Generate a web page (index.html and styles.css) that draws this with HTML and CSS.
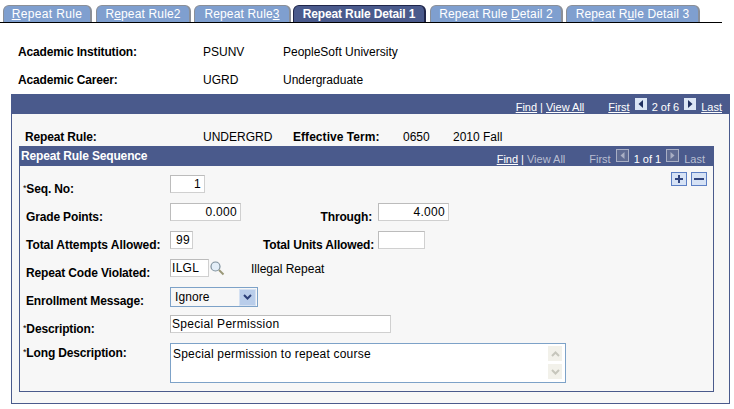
FILE: index.html
```html
<!DOCTYPE html>
<html lang="en">
<head>
<meta charset="utf-8">
<title>Repeat Rule Detail 1</title>
<link rel="stylesheet" href="styles.css">
</head>
<body>
<nav class="tabs">
  <a class="tab t1"><u>R</u>epeat Rule</a>
  <a class="tab t2">R<u>e</u>peat Rule2</a>
  <a class="tab t3">Repeat Rule<u>3</u></a>
  <a class="tab t4 active">Repeat Rule Detail 1</a>
  <a class="tab t5">Repeat Rule <u>D</u>etail 2</a>
  <a class="tab t6">Repeat R<u>u</u>le Detail 3</a>
</nav>
<section class="head">
  <div class="head-row"><b class="head-label">Academic Institution:</b><span class="head-code">PSUNV</span><span>PeopleSoft University</span></div>
  <div class="head-row"><b class="head-label">Academic Career:</b><span class="head-code">UGRD</span><span>Undergraduate</span></div>
</section>
<section class="outer">
  <header class="outer-bar">
    <a class="lnk">Find</a><span class="sep">|</span><a class="lnk">View All</a>
    <a class="lnk first">First</a>
    <svg class="nav" viewBox="0 0 12 12"><rect width="12" height="12" fill="#dce6f5"/><path d="M8 2v8L3.500 6z" fill="#1f2f5f"/></svg>
    <span>2 of 6</span>
    <svg class="nav" viewBox="0 0 12 12"><rect width="12" height="12" fill="#dce6f5"/><path d="M4 2v8l4.500-4z" fill="#1f2f5f"/></svg>
    <a class="lnk">Last</a>
  </header>
  <div class="rule-row">
    <b class="rr-label">Repeat Rule:</b><span class="rr-code">UNDERGRD</span>
    <b class="rr-term">Effective Term:</b><span class="rr-num">0650</span><span>2010 Fall</span>
  </div>
  <section class="inner">
    <header class="inner-bar">
      <b class="inner-title">Repeat Rule Sequence</b>
      <a class="lnk">Find</a><span class="sep">|</span><span class="dim">View All</span>
      <span class="dim first">First</span>
      <svg class="nav off" viewBox="0 0 13 13"><rect x=".5" y=".5" width="12" height="12" fill="#5f6b92" stroke="#a9afc4"/><path d="M8.500 3v7L4.500 6.500z" fill="#a9afc4"/></svg>
      <span>1 of 1</span>
      <svg class="nav off" viewBox="0 0 13 13"><rect x=".5" y=".5" width="12" height="12" fill="#5f6b92" stroke="#a9afc4"/><path d="M4.500 3v7l4-3.500z" fill="#a9afc4"/></svg>
      <span class="dim">Last</span>
    </header>
    <div class="actions">
      <svg class="act" viewBox="0 0 16 14"><rect x=".5" y=".5" width="15" height="13" fill="#d6e2f5" stroke="#5c7fc4"/><path d="M7 3h2v3h3v2H9v3H7V8H4V6h3z" fill="#31457f"/></svg>
      <svg class="act" viewBox="0 0 16 14"><rect x=".5" y=".5" width="15" height="13" fill="#d6e2f5" stroke="#5c7fc4"/><path d="M3 6h10v2H3z" fill="#31457f"/></svg>
    </div>
    <div class="form">
      <div class="row r-seq"><b class="lab req"><sup>*</sup>Seq. No:</b><span class="field w35 num">1</span></div>
      <div class="row"><b class="lab">Grade Points:</b><span class="field w71 num">0.000</span><b class="lab2">Through:</b><span class="field w71 num">4.000</span></div>
      <div class="row"><b class="lab wider">Total Attempts Allowed:</b><span class="field w23 num tight">99</span><b class="lab2 wide">Total Units Allowed:</b><span class="field w47"></span></div>
      <div class="row"><b class="lab">Repeat Code Violated:</b><span class="field w39 code">ILGL</span>
        <svg class="glass" viewBox="0 0 16 16"><circle cx="6.500" cy="6.500" r="4.500" fill="#e3eef8" stroke="#7d8f9c" stroke-width="1.200"/><path d="M10 10l4.500 4.500" stroke="#9a9878" stroke-width="2"/></svg>
        <span class="after">Illegal Repeat</span></div>
      <div class="row r-sel"><b class="lab">Enrollment Message:</b>
        <span class="select"><span class="sel-text">Ignore</span><span class="sel-btn"><svg viewBox="0 0 9 6" width="9" height="6"><path d="M1 1l3.500 3.500L8 1" fill="none" stroke="#2c3f78" stroke-width="2"/></svg></span></span></div>
      <div class="row"><b class="lab req"><sup>*</sup>Description:</b><span class="field w221 code">Special Permission</span></div>
      <div class="row r-long"><b class="lab req"><sup>*</sup>Long Description:</b>
        <div class="area"><span class="area-text">Special permission to repeat course</span>
          <span class="scroll">
            <span class="sb"><svg viewBox="0 0 9 6" width="9" height="6"><path d="M1 5l3.500-3.500L8 5" fill="none" stroke="#c6c6bc" stroke-width="2"/></svg></span>
            <span class="sb"><svg viewBox="0 0 9 6" width="9" height="6"><path d="M1 1l3.500 3.500L8 1" fill="none" stroke="#c6c6bc" stroke-width="2"/></svg></span>
          </span>
        </div></div>
    </div>
  </section>
</section>
</body>
</html>
```
FILE: styles.css
```css
* { box-sizing: border-box; }
html, body { margin: 0; padding: 0; }
body { width: 734px; height: 409px; overflow: hidden; background: #fff; color: #000; font: 12px/14px "Liberation Sans", Arial, sans-serif; }
u { text-decoration: underline; }
b { letter-spacing: -.15px; }
sup { font-size: 9px; line-height: 0; vertical-align: 2px; font-weight: normal; }

.tabs { display: flex; align-items: flex-end; height: 23px; width: 722px; padding: 5px 0 0 3px; border-bottom: 1px solid #000; }
.tab { height: 17px; margin-right: 3px; border: 1px solid #8a8f98; border-bottom: 0; border-right-width: 2px; border-radius: 6px 6px 0 0; background: #7f9fcf; color: #fff; text-align: center; line-height: 16px; letter-spacing: .15px; white-space: nowrap; }
.t1 { width: 89px; margin-right: 4px; letter-spacing: .35px; }
.t2 { width: 95px; }
.t3 { width: 97px; margin-right: 2px; }
.t4 { width: 133px; margin-right: 4px; }
.t5 { width: 133px; margin-right: 3px; }
.t6 { width: 134px; }
.active { background: #4a5a8c; border-color: #20264a; color: #fff; font-weight: bold; letter-spacing: -.15px; }

.head { padding: 22px 0 0 18px; height: 71px; }
.head-row { display: flex; height: 28px; }
.head-label { width: 185px; }
.head-code { width: 80px; }

.outer { margin-left: 11px; width: 719px; height: 310px; border: 1px solid #4a5a8c; border-top: 0; background: #f7f7f7; }
.outer-bar, .inner-bar { display: flex; align-items: center; justify-content: flex-end; height: 20px; background: #4a5a8c; color: #fff; white-space: nowrap; font-size: 11px; }
.outer-bar { padding: 5px 8px 0 0; margin: 0 -1px; }
.inner-bar { padding: 5px 9px 0 2px; margin: 0 -1px; }
.inner-title { margin-right: auto; margin-top: -6px; font-size: 12px; }
.lnk { color: #fff; text-decoration: underline; }
.sep { margin: 0 3px; }
.first { margin-left: 24px; }
.dim { color: #b9bfd2; }
.nav { width: 12px; height: 12px; margin: -6px 5px 0; }
.off { width: 13px; height: 13px; }

.rule-row { display: flex; height: 32px; padding: 16px 0 0 13px; }
.rr-label { width: 178px; }
.rr-code { width: 90px; }
.rr-term { width: 110px; letter-spacing: .05px; }
.rr-num { width: 50px; }

.inner { margin-left: 7px; width: 695px; height: 246px; border: 1px solid #4a5a8c; border-top: 0; }
.actions { display: flex; justify-content: flex-end; gap: 4px; height: 0; padding-right: 6px; padding-top: 6px; }
.act { width: 16px; height: 14px; flex: none; }
.form { padding-top: 3px; padding-left: 6px; }
.row { display: flex; align-items: flex-start; height: 28px; }
.lab { width: 144px; padding-top: 7px; white-space: nowrap; flex: none; }
.wider { letter-spacing: -.05px; }
.req { margin-left: -3px; width: 147px; }
.lab2 { width: 137px; padding-top: 7px; text-align: right; padding-right: 6px; white-space: nowrap; }
.wide { width: 185px; padding-right: 4px; }
.field { display: block; height: 18px; background: #fff; border: 1px solid #bcbcbc; border-bottom-color: #d0d0d0; border-right-color: #d0d0d0; line-height: 16px; padding: 0 3px; flex: none; letter-spacing: .3px; }
.num { text-align: right; }
.tight { padding: 0 2px; }
.code { padding: 0 1px; }
.w35 { width: 35px; }
.w71 { width: 71px; }
.w23 { width: 23px; }
.w47 { width: 47px; }
.w39 { width: 39px; }
.w221 { width: 221px; }
.glass { width: 16px; height: 16px; margin-top: 1px; flex: none; }
.after { margin-left: 26px; padding-top: 3px; }
.r-sel .lab { padding-top: 7px; }
.select { display: flex; align-items: center; justify-content: space-between; width: 88px; height: 20px; border: 1px solid #7da2c8; background: #f7f7f7; padding: 0 1px 0 4px; letter-spacing: .1px; flex: none; }
.sel-btn { display: flex; align-items: center; justify-content: center; width: 17px; height: 17px; background: #b9cdea; border: 1px solid #d5e1f2; }
.sel-btn svg { display: block; }
.area { display: flex; justify-content: space-between; width: 396px; height: 40px; border: 1px solid #7da2c8; background: #fff; padding-left: 2px; flex: none; }
.r-long .lab { padding-top: 3px; }
.area-text { padding-top: 3px; letter-spacing: .2px; }
.scroll { display: flex; flex-direction: column; gap: 1px; width: 16px; margin: 1px 2px 0 0; }
.sb { display: flex; align-items: center; justify-content: center; height: 17px; background: #f2f1ea; border: 1px solid #fff; }
.sb svg { display: block; }
```
